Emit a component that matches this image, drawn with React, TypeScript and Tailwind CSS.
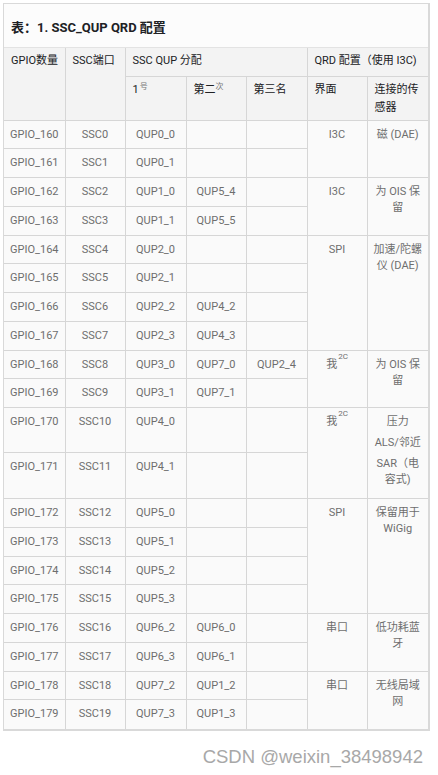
import React from 'react';

type Row = {
  gpio: string;
  ssc: string;
  q1: string;
  q2?: string;
  q3?: string;
  h?: string;
  group?: { span: number; iface: React.ReactNode; sensor: React.ReactNode };
};

const I2C = (
  <>
    我<sup className="text-[8px] ml-[1px] align-super">2C</sup>
  </>
);

const rows: Row[] = [
  { gpio: 'GPIO_160', ssc: 'SSC0', q1: 'QUP0_0', group: { span: 2, iface: 'I3C', sensor: '磁 (DAE)' } },
  { gpio: 'GPIO_161', ssc: 'SSC1', q1: 'QUP0_1' },
  { gpio: 'GPIO_162', ssc: 'SSC2', q1: 'QUP1_0', q2: 'QUP5_4', group: { span: 2, iface: 'I3C', sensor: <>为 OIS 保<br />留</> } },
  { gpio: 'GPIO_163', ssc: 'SSC3', q1: 'QUP1_1', q2: 'QUP5_5' },
  { gpio: 'GPIO_164', ssc: 'SSC4', q1: 'QUP2_0', group: { span: 4, iface: 'SPI', sensor: <>加速/陀螺<br />仪 (DAE)</> } },
  { gpio: 'GPIO_165', ssc: 'SSC5', q1: 'QUP2_1' },
  { gpio: 'GPIO_166', ssc: 'SSC6', q1: 'QUP2_2', q2: 'QUP4_2' },
  { gpio: 'GPIO_167', ssc: 'SSC7', q1: 'QUP2_3', q2: 'QUP4_3' },
  { gpio: 'GPIO_168', ssc: 'SSC8', q1: 'QUP3_0', q2: 'QUP7_0', q3: 'QUP2_4', group: { span: 2, iface: I2C, sensor: <>为 OIS 保<br />留</> } },
  { gpio: 'GPIO_169', ssc: 'SSC9', q1: 'QUP3_1', q2: 'QUP7_1' },
  {
    gpio: 'GPIO_170', ssc: 'SSC10', q1: 'QUP4_0', h: 'h-[45px]',
    group: {
      span: 2,
      iface: I2C,
      sensor: (
        <>
          <div>压力</div>
          <div className="mt-[5px]">ALS/邻近</div>
          <div className="mt-[5px]">SAR（电<br />容式)</div>
        </>
      ),
    },
  },
  { gpio: 'GPIO_171', ssc: 'SSC11', q1: 'QUP4_1', h: 'h-[46px]' },
  { gpio: 'GPIO_172', ssc: 'SSC12', q1: 'QUP5_0', group: { span: 4, iface: 'SPI', sensor: <>保留用于<br />WiGig</> } },
  { gpio: 'GPIO_173', ssc: 'SSC13', q1: 'QUP5_1' },
  { gpio: 'GPIO_174', ssc: 'SSC14', q1: 'QUP5_2' },
  { gpio: 'GPIO_175', ssc: 'SSC15', q1: 'QUP5_3' },
  { gpio: 'GPIO_176', ssc: 'SSC16', q1: 'QUP6_2', q2: 'QUP6_0', group: { span: 2, iface: '串口', sensor: <>低功耗蓝<br />牙</> } },
  { gpio: 'GPIO_177', ssc: 'SSC17', q1: 'QUP6_3', q2: 'QUP6_1' },
  { gpio: 'GPIO_178', ssc: 'SSC18', q1: 'QUP7_2', q2: 'QUP1_2', group: { span: 2, iface: '串口', sensor: <>无线局域<br />网</> } },
  { gpio: 'GPIO_179', ssc: 'SSC19', q1: 'QUP7_3', q2: 'QUP1_3' },
];

const td = 'border border-[#d6d6d6] px-[6px] pt-[6px] align-top text-center whitespace-nowrap';
const th = 'border border-[#d6d6d6] px-[7px] pt-[4px] align-top text-left font-normal whitespace-nowrap';

export default function App() {
  return (
    <div className="w-[438px] h-[775px] bg-white font-['Roboto','Noto_Sans_CJK_SC',sans-serif]">
      <div className="pt-[3px] pl-[3px]">
        <div className="w-[427px] border-t border-l border-r-2 border-b-2 border-[#d9d9d9] bg-[#fafafa]">
          <div className="h-[44px] border-b border-[#e3e3e3] bg-[#fcfcfc] pl-[7px] pt-[14px] text-[13px] leading-[20px] font-bold text-[#202124]">
            表：1. SSC_QUP QRD 配置
          </div>
          <table className="w-full table-fixed border-collapse border-hidden text-[11px] leading-[16px]">
            <colgroup>
              <col className="w-[61px]" />
              <col className="w-[60px]" />
              <col className="w-[61px]" />
              <col className="w-[60px]" />
              <col className="w-[61px]" />
              <col className="w-[60px]" />
              <col className="w-[61px]" />
            </colgroup>
            <thead className="bg-[#f3f3f3] text-[#202124] leading-[18px]">
              <tr className="h-[28px]">
                <th rowSpan={2} className={th}>GPIO数量</th>
                <th rowSpan={2} className={th}>SSC端口</th>
                <th colSpan={3} className={th}>SSC QUP 分配</th>
                <th colSpan={2} className={th}>QRD 配置（使用 I3C)</th>
              </tr>
              <tr className="h-[44px]">
                <th className={th}>
                  1<sup className="text-[8px] ml-[1px] text-[#777]">号</sup>
                </th>
                <th className={th}>
                  第二<sup className="text-[8px] text-[#777]">次</sup>
                </th>
                <th className={th}>第三名</th>
                <th className={th}>界面</th>
                <th className={th}>
                  连接的传
                  <br />
                  感器
                </th>
              </tr>
            </thead>
            <tbody className="text-[#6e6e6e]">
              {rows.map((r) => (
                <tr key={r.gpio} className={r.h ?? 'h-[28.75px]'}>
                  <td className={td}>{r.gpio}</td>
                  <td className={td}>{r.ssc}</td>
                  <td className={td}>{r.q1}</td>
                  <td className={td}>{r.q2 ?? ''}</td>
                  <td className={td}>{r.q3 ?? ''}</td>
                  {r.group && (
                    <>
                      <td rowSpan={r.group.span} className={td}>{r.group.iface}</td>
                      <td rowSpan={r.group.span} className={td}>{r.group.sensor}</td>
                    </>
                  )}
                </tr>
              ))}
            </tbody>
          </table>
        </div>
      </div>
      <div className="mt-[14px] pr-[15px] text-right text-[18.5px] leading-[24px] text-[#a8a8a8] font-['Liberation_Sans',sans-serif] [text-shadow:0_0_1px_#fff]">
        CSDN @weixin_38498942
      </div>
    </div>
  );
}
